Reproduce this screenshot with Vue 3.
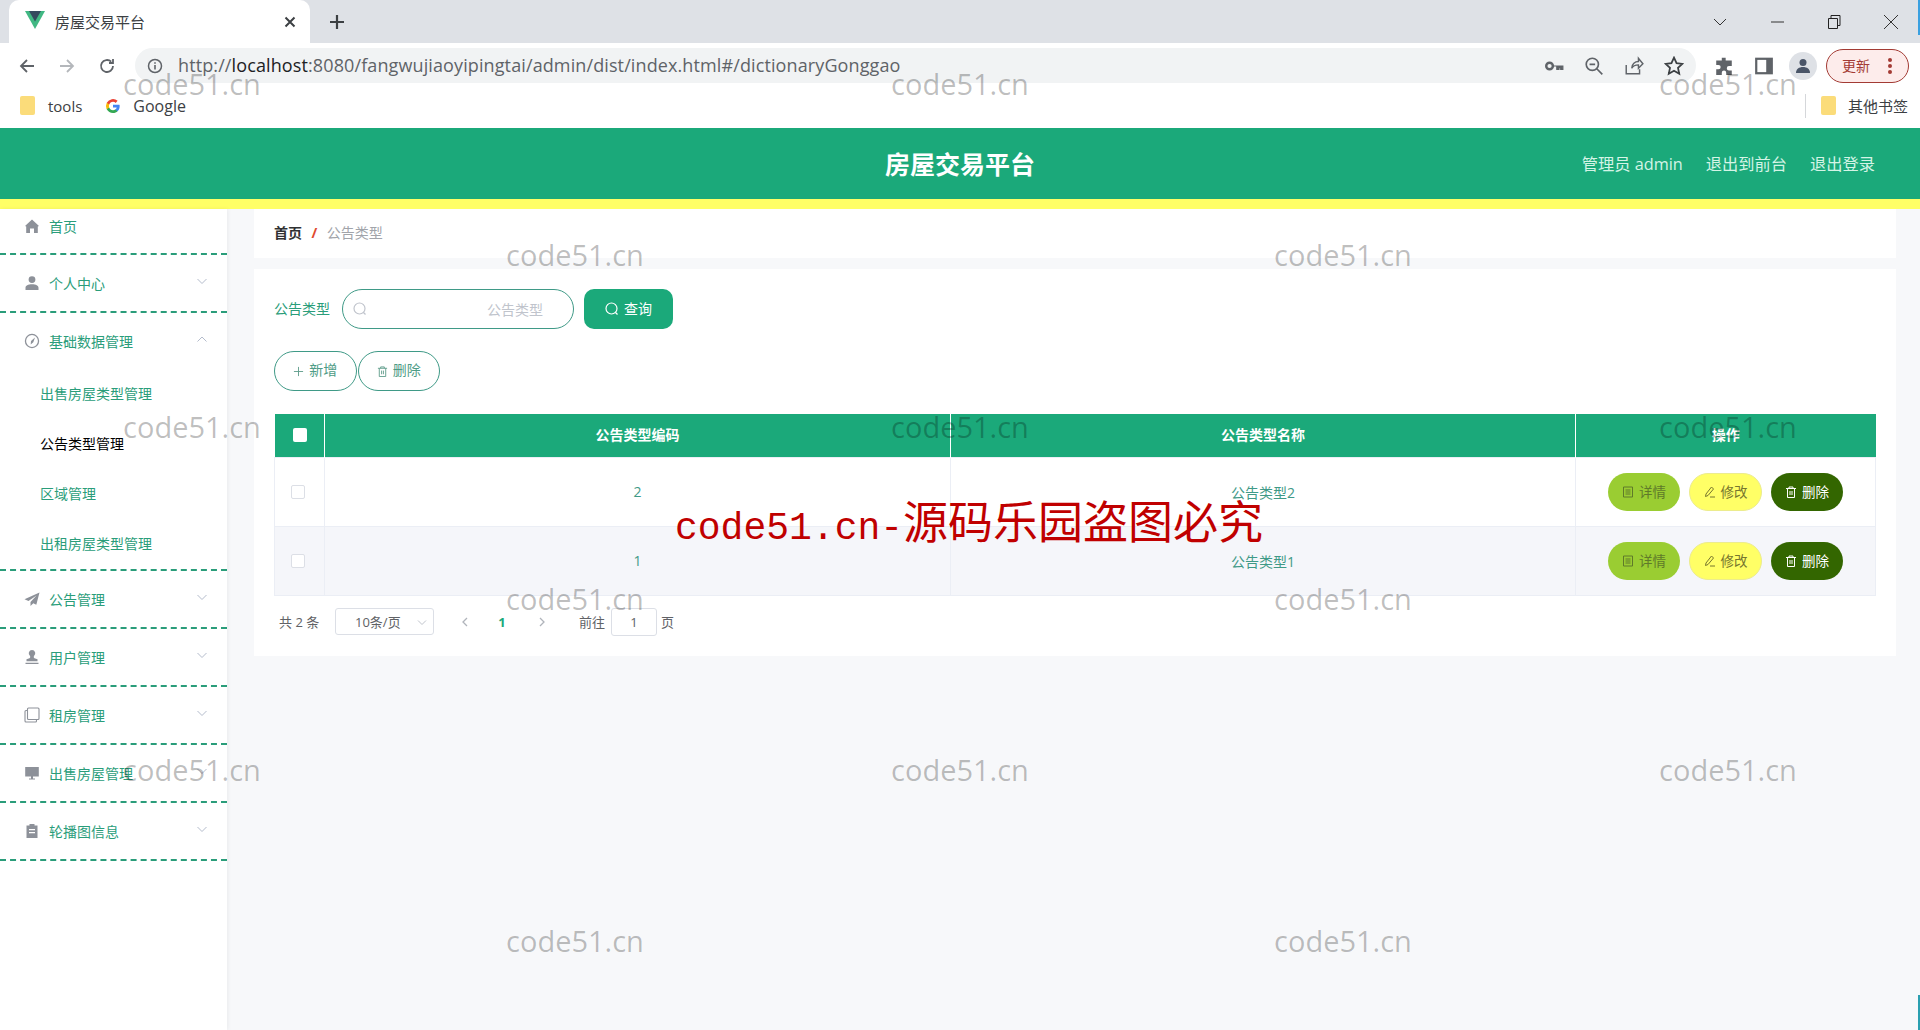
<script setup>
const icons = {
  home: "M8 1.5 15 8l-1.2.6V15H10v-4.5H6V15H2.2V8.6L1 8z",
  user: "M8 1.2a3.4 3.4 0 1 1 0 6.8 3.4 3.4 0 0 1 0-6.8zM1.5 15v-2.2C1.5 10.6 4 9.2 8 9.2s6.500 1.400 6.500 3.600V15z",
  compass: "M8 .8a7.200 7.200 0 1 1 0 14.400A7.200 7.200 0 0 1 8 .8zm0 1.300a5.900 5.900 0 1 0 0 11.800A5.900 5.900 0 0 0 8 2.100zM11 4.500 9.300 9.300 6.700 11.500 7 8z",
  plane: "M15.500 1.500.5 8.200l4 1.800 8-5.500-6 6.500v4l2.800-2.700 3 1.500z",
  stamp: "M8 1a3.300 3.300 0 0 1 2 5.900c-.5.800-.3 1.800.5 2.300l3 1v2H2.500v-2l3-1c.8-.5 1-1.500.5-2.300A3.300 3.300 0 0 1 8 1zM1.500 13.800h13V15h-13z",
  monitor: "M1.200 2h13.600v9.500H1.200zM5 13.500h6v1H5zM7 11.500h2v2H7z",
  clipboard: "M5.500 1h5v1.500h3V15h-11V2.500h3zM5 6v1.200h6V6zm0 3v1.200h6V9z"
};

const menus = [
  { name: "首页", icon: "home", first: true },
  { name: "个人中心", icon: "user", arrow: true },
  {
    name: "基础数据管理",
    icon: "compass",
    open: true,
    children: ["出售房屋类型管理", "公告类型管理", "区域管理", "出租房屋类型管理"]
  },
  { name: "公告管理", icon: "plane", arrow: true },
  { name: "用户管理", icon: "stamp", arrow: true },
  { name: "租房管理", icon: "copy", arrow: true },
  { name: "出售房屋管理", icon: "monitor", arrow: true },
  { name: "轮播图信息", icon: "clipboard", arrow: true }
];

const rows = [
  { code: 2, name: "公告类型2" },
  { code: 1, name: "公告类型1" }
];

// 水印按网格错开排列
const marks = [];
[83, 254, 426, 598, 769, 940].forEach((y, i) => {
  const xs = i % 2 === 0 ? [192, 960, 1728] : [575, 1343];
  xs.forEach((x) => marks.push({ x, y }));
});
</script>

<template>
  <div class="page">
    <div class="tabstrip">
      <div class="tab">
        <svg class="favicon" viewBox="0 0 20 18">
          <path d="M0 0h20L10 18z" fill="#41b883" />
          <path d="M4 0h12l-6 10.500z" fill="#35495e" />
        </svg>
        <span class="tab-title">房屋交易平台</span>
        <svg class="tab-close" viewBox="0 0 12 12">
          <path d="M1.500 1.500l9 9m0-9l-9 9" stroke="#3c4043" stroke-width="2" fill="none" />
        </svg>
      </div>
      <svg class="tab-add" viewBox="0 0 16 16">
        <path d="M8 1v14M1 8h14" stroke="#3c4043" stroke-width="2.200" fill="none" />
      </svg>
      <div class="win-controls">
        <svg viewBox="0 0 16 16"><path d="M2 5l6 6 6-6" stroke="#333" fill="none" /></svg>
        <svg viewBox="0 0 16 16"><path d="M2 8h13" stroke="#333" fill="none" /></svg>
        <svg viewBox="0 0 16 16"><path d="M2.500 4.500h9v10h-9zM5 4.500V1.500h9v10h-2.500" stroke="#222" fill="none" /></svg>
        <svg viewBox="0 0 16 16"><path d="M1 1l14 14M15 1L1 15" stroke="#333" fill="none" /></svg>
      </div>
    </div>

    <div class="toolbar">
      <svg class="nav-icon" viewBox="0 0 18 18"><path d="M16 9H3M9 3L3 9l6 6" stroke="#5f6368" stroke-width="1.800" fill="none" /></svg>
      <svg class="nav-icon" viewBox="0 0 18 18"><path d="M2 9h13M9 3l6 6-6 6" stroke="#b4b7bb" stroke-width="1.800" fill="none" /></svg>
      <svg class="nav-icon" viewBox="0 0 18 18"><path d="M15 9a6 6 0 1 1-1.800-4.300M15 2v4h-4" stroke="#5f6368" stroke-width="1.800" fill="none" /></svg>
      <div class="urlbar">
        <svg class="url-info" viewBox="0 0 16 16">
          <circle cx="8" cy="8" r="6.500" stroke="#5f6368" stroke-width="1.500" fill="none" />
          <path d="M8 7v4.500M8 4.200v1.500" stroke="#5f6368" stroke-width="1.600" />
        </svg>
        <span class="url-text">http://<b>localhost</b>:8080/fangwujiaoyipingtai/admin/dist/index.html#/dictionaryGonggao</span>
        <div class="url-tools">
          <svg viewBox="0 0 18 18"><circle cx="5" cy="9" r="3" stroke="#5f6368" stroke-width="2.200" fill="none" /><path d="M8 9h9v3h-2v-1.500h-1.500V12h-2V9" fill="#5f6368" stroke="#5f6368" /></svg>
          <svg viewBox="0 0 18 18"><circle cx="7.500" cy="7.500" r="5.500" stroke="#5f6368" stroke-width="1.500" fill="none" /><path d="M5 7.500h5M11.500 11.500l5 5" stroke="#5f6368" stroke-width="1.500" /></svg>
          <svg viewBox="0 0 18 18"><path d="M2 8v8h12v-4M7 11c0-4 3-6 6-6V2l4 5-4 4V8c-3 0-5 1-6 3z" stroke="#5f6368" stroke-width="1.300" fill="none" /></svg>
          <svg viewBox="0 0 18 18"><path d="M9 1.500l2.300 5 5.200.6-3.900 3.600 1.100 5.300L9 13.300 4.300 16l1.100-5.300L1.500 7.100l5.200-.6z" stroke="#3c4043" stroke-width="1.600" fill="none" /></svg>
        </div>
      </div>
      <div class="ext-tools">
        <svg viewBox="0 0 18 18"><path d="M7 1.500h3.500V4H16v5h-2.500a2 2 0 0 0 0 4H16v4h-5v-2a2 2 0 0 0-4 0v2H2v-5h2a2 2 0 0 0 0-4H2V4h5z" fill="#5f6368" /></svg>
        <svg viewBox="0 0 18 18"><path d="M1 1.500h16v15H1z" fill="#5f6368" /><path d="M3 3.500h8v11H3z" fill="#fff" /></svg>
        <span class="avatar">
          <svg viewBox="0 0 18 18"><circle cx="9" cy="5.500" r="3.500" fill="#4a5568" /><path d="M2 16c0-4 3-6 7-6s7 2 7 6z" fill="#4a5568" /></svg>
        </span>
        <span class="update-pill">更新<i class="dots"></i></span>
      </div>
    </div>

    <div class="bookmarks">
      <i class="folder"></i>
      <span class="bm-text tools">tools</span>
      <svg class="g-logo" viewBox="0 0 18 18">
        <path d="M16.500 9.200c0-.6 0-1.100-.2-1.600H9v3h4.200c-.2 1-.8 1.900-1.700 2.400v2h2.600c1.500-1.400 2.400-3.400 2.400-5.800z" fill="#4285f4" />
        <path d="M9 17c2.200 0 4-.7 5.100-2l-2.600-2c-.7.500-1.500.7-2.500.7-2 0-3.700-1.300-4.300-3.100H2v2.100C3.300 15.300 6 17 9 17z" fill="#34a853" />
        <path d="M4.700 10.600a5 5 0 0 1 0-3.200V5.300H2a8 8 0 0 0 0 7.400z" fill="#fbbc05" />
        <path d="M9 4.300c1.200 0 2.200.4 3 1.200l2.200-2.300A8 8 0 0 0 2 5.300l2.700 2.100C5.300 5.600 7 4.300 9 4.300z" fill="#ea4335" />
      </svg>
      <span class="bm-text google">Google</span>
      <div class="bm-right">
        <i class="bm-sep"></i>
        <i class="folder"></i>
        <span class="bm-text">其他书签</span>
      </div>
    </div>

    <header class="topbar">
      <div class="site-title">房屋交易平台</div>
      <div class="top-links">
        <span>管理员 admin</span>
        <span>退出到前台</span>
        <span>退出登录</span>
      </div>
    </header>
    <div class="top-line"></div>

    <div class="layout">
      <aside class="sidebar">
        <div v-for="m in menus" :key="m.name" class="menu-group">
          <div class="menu-item" :class="{ first: m.first }">
            <svg v-if="m.icon === 'copy'" class="menu-icon" viewBox="0 0 16 16">
              <path d="M4.500 1h9.500a1 1 0 0 1 1 1v9.500a1 1 0 0 1-1 1H4.500a1 1 0 0 1-1-1V2a1 1 0 0 1 1-1z" stroke="#8d9199" stroke-width="1.100" fill="none" />
              <path d="M3.500 3.500H2a1 1 0 0 0-1 1V14a1 1 0 0 0 1 1h9.500a1 1 0 0 0 1-1v-1.500" stroke="#8d9199" stroke-width="1.100" fill="none" />
            </svg>
            <svg v-else class="menu-icon" viewBox="0 0 16 16"><path :d="icons[m.icon]" fill="#8d9199" fill-rule="evenodd" /></svg>
            <span class="menu-name">{{ m.name }}</span>
            <svg v-if="m.arrow" class="menu-arrow" viewBox="0 0 12 12"><path d="M1.500 4l4.500 4.500L10.500 4" stroke="#b4bccc" fill="none" /></svg>
            <svg v-if="m.open" class="menu-arrow" viewBox="0 0 12 12"><path d="M1.500 8.500L6 4l4.500 4.500" stroke="#b4bccc" fill="none" /></svg>
          </div>
          <div v-if="m.children" class="submenu">
            <div
              v-for="c in m.children"
              :key="c"
              class="sub-item"
              :class="{ active: c === '公告类型管理' }"
            >{{ c }}</div>
          </div>
        </div>
      </aside>

      <main class="main">
        <div class="crumb">
          <span class="crumb-home">首页</span>
          <span class="crumb-sep">/</span>
          <span class="crumb-now">公告类型</span>
        </div>

        <section class="card">
          <div class="search-row">
            <label class="search-label">公告类型</label>
            <div class="search-input">
              <svg class="search-icon" viewBox="0 0 14 14"><circle cx="6.500" cy="6.500" r="5.500" stroke="#c0c4cc" stroke-width="1.200" fill="none" /><path d="M10.500 10.500l2 2" stroke="#c0c4cc" stroke-width="1.200" /></svg>
              <span class="placeholder">公告类型</span>
            </div>
            <button class="search-btn">
              <svg viewBox="0 0 14 14"><circle cx="6.500" cy="6.500" r="5.500" stroke="#fff" stroke-width="1.200" fill="none" /><path d="M10.500 10.500l2 2" stroke="#fff" stroke-width="1.200" /></svg>
              查询
            </button>
          </div>

          <div class="action-row">
            <button class="ghost-btn">
              <svg viewBox="0 0 12 12"><path d="M6 1v10M1 6h10" stroke="#5f9c8b" fill="none" /></svg>
              新增
            </button>
            <button class="ghost-btn">
              <svg viewBox="0 0 12 12"><path d="M1 2.500h10M2.500 2.500v9h7v-9M4 2.500V1h4v1.500M5 5v4M7 5v4" stroke="#5f9c8b" fill="none" /></svg>
              删除
            </button>
          </div>

          <table class="grid">
            <colgroup>
              <col style="width: 50px" />
              <col style="width: 626px" />
              <col style="width: 625px" />
              <col style="width: 300px" />
            </colgroup>
            <thead>
              <tr>
                <th><i class="head-check"></i></th>
                <th>公告类型编码</th>
                <th>公告类型名称</th>
                <th>操作</th>
              </tr>
            </thead>
            <tbody>
              <tr v-for="r in rows" :key="r.code">
                <td class="check-cell"><i class="row-check"></i></td>
                <td>{{ r.code }}</td>
                <td>{{ r.name }}</td>
                <td class="op-cell">
                  <button class="op-btn detail">
                    <svg viewBox="0 0 12 12"><path d="M1.500 1h9v10h-9zM3.500 4h5M3.500 6h5M3.500 8h5" stroke="#5f7a2a" fill="none" /></svg>
                    详情
                  </button>
                  <button class="op-btn edit">
                    <svg viewBox="0 0 12 12"><path d="M7.500 1l2 2L4 9.500 1.500 10.500 2 8zM6 11h5" stroke="#77762e" fill="none" /></svg>
                    修改
                  </button>
                  <button class="op-btn remove">
                    <svg viewBox="0 0 12 12"><path d="M1 2.500h10M2.500 2.500v9h7v-9M4 2.500V1h4v1.500M5 5v4M7 5v4" stroke="#fff" fill="none" /></svg>
                    删除
                  </button>
                </td>
              </tr>
            </tbody>
          </table>

          <div class="pager">
            <span class="total">共 2 条</span>
            <div class="size-select">
              <span>10条/页</span>
              <svg viewBox="0 0 12 12"><path d="M2 4.500l4 4 4-4" stroke="#c0c4cc" fill="none" /></svg>
            </div>
            <svg class="pager-arrow" viewBox="0 0 12 12"><path d="M8 2L4 6l4 4" stroke="#b0b4bb" stroke-width="1.300" fill="none" /></svg>
            <span class="pager-num">1</span>
            <svg class="pager-arrow" viewBox="0 0 12 12"><path d="M4 2l4 4-4 4" stroke="#b0b4bb" stroke-width="1.300" fill="none" /></svg>
            <span class="goto">前往</span>
            <span class="goto-input">1</span>
            <span class="goto-end">页</span>
          </div>
        </section>
      </main>
    </div>

    <span
      v-for="(w, i) in marks"
      :key="i"
      class="watermark"
      :style="{ left: w.x + 'px', top: w.y + 'px' }"
    >code51.cn</span>
    <div class="stamp"><span class="stamp-latin">code51.cn-</span>源码乐园盗图必究</div>
    <i class="edge edge-top"></i>
    <i class="edge edge-bottom"></i>
  </div>
</template>

<style>
html,
body {
  margin: 0;
  background: #f7f8fa;
}
</style>

<style scoped>
.page {
  position: relative;
  width: 1920px;
  height: 1030px;
  overflow: hidden;
  display: flex;
  flex-direction: column;
  font-family: "Open Sans", "Noto Sans CJK SC", sans-serif;
  font-size: 14px;
  background: #f7f8fa;
}
i {
  display: block;
}
button {
  font-family: inherit;
  cursor: pointer;
}

/* 浏览器外框 */
.tabstrip {
  height: 43px;
  flex: none;
  display: flex;
  align-items: center;
  background: #dee1e6;
  box-sizing: border-box;
  padding-left: 9px;
}
.tab {
  width: 301px;
  height: 43px;
  box-sizing: border-box;
  background: #fff;
  border-radius: 10px 10px 0 0;
  display: flex;
  align-items: center;
  padding: 0 14px 0 16px;
}
.favicon {
  width: 20px;
  height: 18px;
  margin-top: -4px;
}
.tab-title {
  margin-left: 10px;
  font-size: 15px;
  color: #3c4043;
  flex: 1;
}
.tab-close {
  width: 12px;
  height: 12px;
}
.tab-add {
  width: 16px;
  height: 16px;
  margin-left: 19px;
}
.win-controls {
  margin-left: auto;
  display: flex;
  gap: 41px;
  padding-right: 21px;
}
.win-controls svg {
  width: 16px;
  height: 16px;
}

.toolbar {
  height: 40px;
  flex: none;
  background: #fff;
  display: flex;
  align-items: flex-end;
  padding-left: 18px;
  box-sizing: border-box;
  position: relative;
}
.nav-icon {
  width: 18px;
  height: 18px;
  margin: 0 22px 8px 0;
}
.urlbar {
  width: 1561px;
  height: 35px;
  margin-left: -3px;
  background: #f1f3f4;
  border-radius: 18px;
  display: flex;
  align-items: center;
  padding-left: 12px;
  box-sizing: border-box;
}
.url-info {
  width: 16px;
  height: 16px;
}
.url-text {
  margin-left: 15px;
  font-size: 18px;
  letter-spacing: 0.11px;
  color: #5f6368;
  white-space: nowrap;
  padding-bottom: 2px;
}
.url-text b {
  font-weight: 400;
  color: #202124;
}
.url-tools {
  margin-left: auto;
  display: flex;
  gap: 20px;
  padding-right: 12px;
}
.url-tools svg {
  width: 20px;
  height: 20px;
}
.ext-tools {
  height: 35px;
  display: flex;
  align-items: center;
  margin-left: 18px;
}
.ext-tools > svg {
  width: 20px;
  height: 20px;
  margin-right: 20px;
}
.avatar {
  width: 28px;
  height: 28px;
  border-radius: 50%;
  background: #dee1e6;
  display: flex;
  align-items: center;
  justify-content: center;
  margin-left: -5px;
}
.avatar svg {
  width: 18px;
  height: 18px;
}
.update-pill {
  width: 83px;
  height: 34px;
  margin-left: 9px;
  box-sizing: border-box;
  border: 1px solid #a33b34;
  border-radius: 17px;
  background: #fdeceb;
  color: #a33b34;
  font-size: 14px;
  display: flex;
  align-items: center;
  padding: 0 0 2px 15px;
  position: relative;
}
.dots {
  position: absolute;
  right: 16px;
  top: 14px;
  width: 4px;
  height: 4px;
  border-radius: 50%;
  background: #a33b34;
  box-shadow: 0 -6px 0 #a33b34, 0 6px 0 #a33b34;
}

.bookmarks {
  height: 45px;
  flex: none;
  background: #fff;
  display: flex;
  align-items: center;
  padding-left: 20px;
  box-sizing: border-box;
}
.folder {
  width: 15px;
  height: 19px;
  background: #fbdc7a;
  border-radius: 2px;
}
.bm-text {
  font-size: 15px;
  color: #3c4043;
}
.tools {
  margin-left: 13px;
}
.google {
  font-size: 16px;
}
.g-logo {
  width: 16px;
  height: 16px;
  margin: 0 12px 0 23px;
}
.bm-right {
  margin-left: auto;
  display: flex;
  align-items: center;
  padding-right: 12px;
}
.bm-sep {
  width: 1px;
  height: 24px;
  background: #d5d7da;
  margin-right: 15px;
}
.bm-right .bm-text {
  margin-left: 12px;
}

/* 顶部 */
.topbar {
  height: 71px;
  flex: none;
  background: #1ba97a;
  display: flex;
  align-items: center;
  justify-content: center;
  position: relative;
}
.site-title {
  font-size: 25px;
  font-weight: 700;
  color: #fff;
  padding-bottom: 2px;
}
.top-links {
  position: absolute;
  right: 45px;
  top: 0;
  bottom: 0;
  display: flex;
  align-items: center;
  gap: 23px;
  font-size: 16.250px;
  color: #d4f4e6;
  padding-bottom: 1px;
}
.top-line {
  height: 10px;
  flex: none;
  background: #ffff66;
}

.layout {
  flex: 1;
  display: flex;
  min-height: 0;
}

/* 左侧菜单 */
.sidebar {
  width: 227px;
  flex: none;
  background: #fff;
  box-shadow: 1px 0 4px rgba(0, 0, 0, 0.06);
}
.menu-group {
  border-bottom: 2px dashed #2a9d7a;
}
.menu-item {
  height: 56px;
  display: flex;
  align-items: center;
  padding: 0 19px 0 24px;
  box-sizing: border-box;
  color: #2a9d7a;
}
.menu-item.first {
  height: 44px;
  padding-bottom: 11px;
}
.menu-icon {
  width: 16px;
  height: 16px;
  margin-right: 9px;
  flex: none;
}
.menu-name {
  flex: 1;
  white-space: nowrap;
}
.menu-arrow {
  width: 12px;
  height: 12px;
  margin-top: -5px;
}
.sub-item {
  height: 50px;
  line-height: 50px;
  padding-left: 40px;
  color: #2a9d7a;
}
.sub-item.active {
  color: #000;
}

/* 右侧内容 */
.main {
  flex: 1;
  padding: 0 24px 0 27px;
  min-width: 0;
}
.crumb {
  height: 49px;
  background: #fff;
  padding: 0 20px;
  display: flex;
  align-items: center;
  padding-bottom: 3px;
  box-sizing: border-box;
}
.crumb-home {
  font-weight: 700;
  color: #303133;
}
.crumb-sep {
  margin: 0 9.500px;
  color: #e0492f;
  font-weight: 700;
}
.crumb-now {
  color: #a1a4aa;
}
.card {
  margin-top: 11px;
  background: #fff;
  padding: 20px 20px 20px;
}
.search-row {
  display: flex;
  align-items: center;
  height: 40px;
}
.search-label {
  width: 68px;
  flex: none;
  color: #2a9d7a;
  padding-bottom: 2px;
}
.search-input {
  width: 232px;
  height: 40px;
  box-sizing: border-box;
  border: 1px solid #3f9a87;
  border-radius: 20px;
  display: flex;
  align-items: center;
  position: relative;
}
.search-icon {
  width: 14px;
  height: 14px;
  margin-left: 10px;
}
.placeholder {
  position: absolute;
  left: 144px;
  color: #c0c4cc;
}
.search-btn {
  width: 89px;
  height: 40px;
  margin-left: 10px;
  border: 0;
  border-radius: 10px;
  background: #1ba97a;
  color: #fff;
  font-size: 14px;
  display: flex;
  align-items: center;
  justify-content: center;
  gap: 5px;
  padding: 0 0 2px;
}
.search-btn svg {
  width: 14px;
  height: 14px;
  margin-top: 2px;
}
.action-row {
  display: flex;
  gap: 1px;
  margin-top: 22px;
}
.ghost-btn {
  width: 82.500px;
  height: 40px;
  border: 1px solid #3f9a87;
  border-radius: 20px;
  background: #fff;
  color: #4e9c86;
  font-size: 14px;
  display: flex;
  align-items: center;
  justify-content: center;
  gap: 5px;
  padding: 0 0 4px;
}
.ghost-btn svg {
  width: 11px;
  height: 11px;
  margin-top: 4px;
}
.grid {
  width: 1601px;
  margin-top: 23px;
  border-collapse: collapse;
  table-layout: fixed;
  text-align: center;
}
.grid th {
  height: 43px;
  box-sizing: border-box;
  padding: 0 0 2px;
  background: #1ba97a;
  color: #fff;
  font-weight: 700;
  border-right: 1px solid #fff;
}
.grid th:last-child {
  border-right: 0;
}
.grid td {
  height: 68px;
  padding: 0;
  color: #3f9a87;
  border: 1px solid #ebeef5;
}
.grid tbody tr:nth-child(2) td {
  background: #f5f6fa;
}
.head-check {
  width: 14px;
  height: 14px;
  margin: 2px auto 0;
  background: #fff;
  border-radius: 2px;
  transform: translateX(1px);
}
.row-check {
  width: 14px;
  height: 14px;
  box-sizing: border-box;
  margin-left: 16px;
  background: #fff;
  border: 1px solid #dcdfe6;
  border-radius: 2px;
}
.op-cell {
  padding: 0 !important;
  white-space: nowrap;
  font-size: 0;
}
.op-btn {
  width: 72px;
  height: 38px;
  border-radius: 19px;
  border: 1px solid transparent;
  font-size: 13.500px;
  padding: 0 0 2px;
  margin: 0 4.500px;
  display: inline-flex;
  align-items: center;
  justify-content: center;
  gap: 5px;
  vertical-align: middle;
}
.op-btn svg {
  width: 12px;
  height: 12px;
  margin-top: 2px;
}
.detail {
  background: #9acd32;
  color: #5f7a2a;
}
.edit {
  width: 73px;
  background: #ffff66;
  border-color: #ecec8e;
  color: #77762e;
}
.remove {
  background: #336600;
  color: #fff;
}
.pager {
  height: 28px;
  margin-top: 12px;
  display: flex;
  align-items: center;
  font-size: 13px;
  color: #606266;
  padding-left: 5px;
}
.total {
  width: 56px;
}
.size-select {
  width: 99px;
  height: 27px;
  box-sizing: border-box;
  border: 1px solid #dcdfe6;
  border-radius: 3px;
  display: flex;
  align-items: center;
  padding-left: 19px;
  position: relative;
}
.size-select svg {
  position: absolute;
  right: 5px;
  width: 12px;
  height: 12px;
}
.pager-arrow {
  width: 12px;
  height: 12px;
  margin-left: 25px;
}
.pager-num {
  width: 14px;
  margin-left: 24px;
  text-align: center;
  font-weight: 700;
  color: #1ba97a;
}
.pager-num + .pager-arrow {
  margin-left: 27px;
}
.goto {
  margin-left: 31px;
}
.goto-input {
  width: 46px;
  height: 28px;
  margin-left: 6px;
  box-sizing: border-box;
  border: 1px solid #dcdfe6;
  border-radius: 3px;
  display: flex;
  align-items: center;
  justify-content: center;
}
.goto-end {
  margin-left: 4px;
}

/* 水印 */
.watermark {
  position: absolute;
  transform: translate(-50%, -50%);
  font-family: "Open Sans", sans-serif;
  font-size: 29px;
  line-height: 1;
  color: rgba(0, 0, 0, 0.26);
  pointer-events: none;
  white-space: nowrap;
}
.stamp {
  position: absolute;
  left: 675px;
  top: 492px;
  font-family: "Noto Sans CJK SC", sans-serif;
  font-size: 45px;
  line-height: 56px;
  color: #c00000;
  white-space: nowrap;
  pointer-events: none;
}
.stamp-latin {
  font-family: "Liberation Mono", monospace;
  font-size: 38px;
}
/* 截图边缘露出的桌面 */
.edge {
  position: absolute;
  right: 0;
  width: 2px;
}
.edge-top {
  top: 0;
  height: 35px;
  background: #3aa0e0;
}
.edge-bottom {
  bottom: 0;
  height: 35px;
  background: #2a9fb0;
}
</style>
